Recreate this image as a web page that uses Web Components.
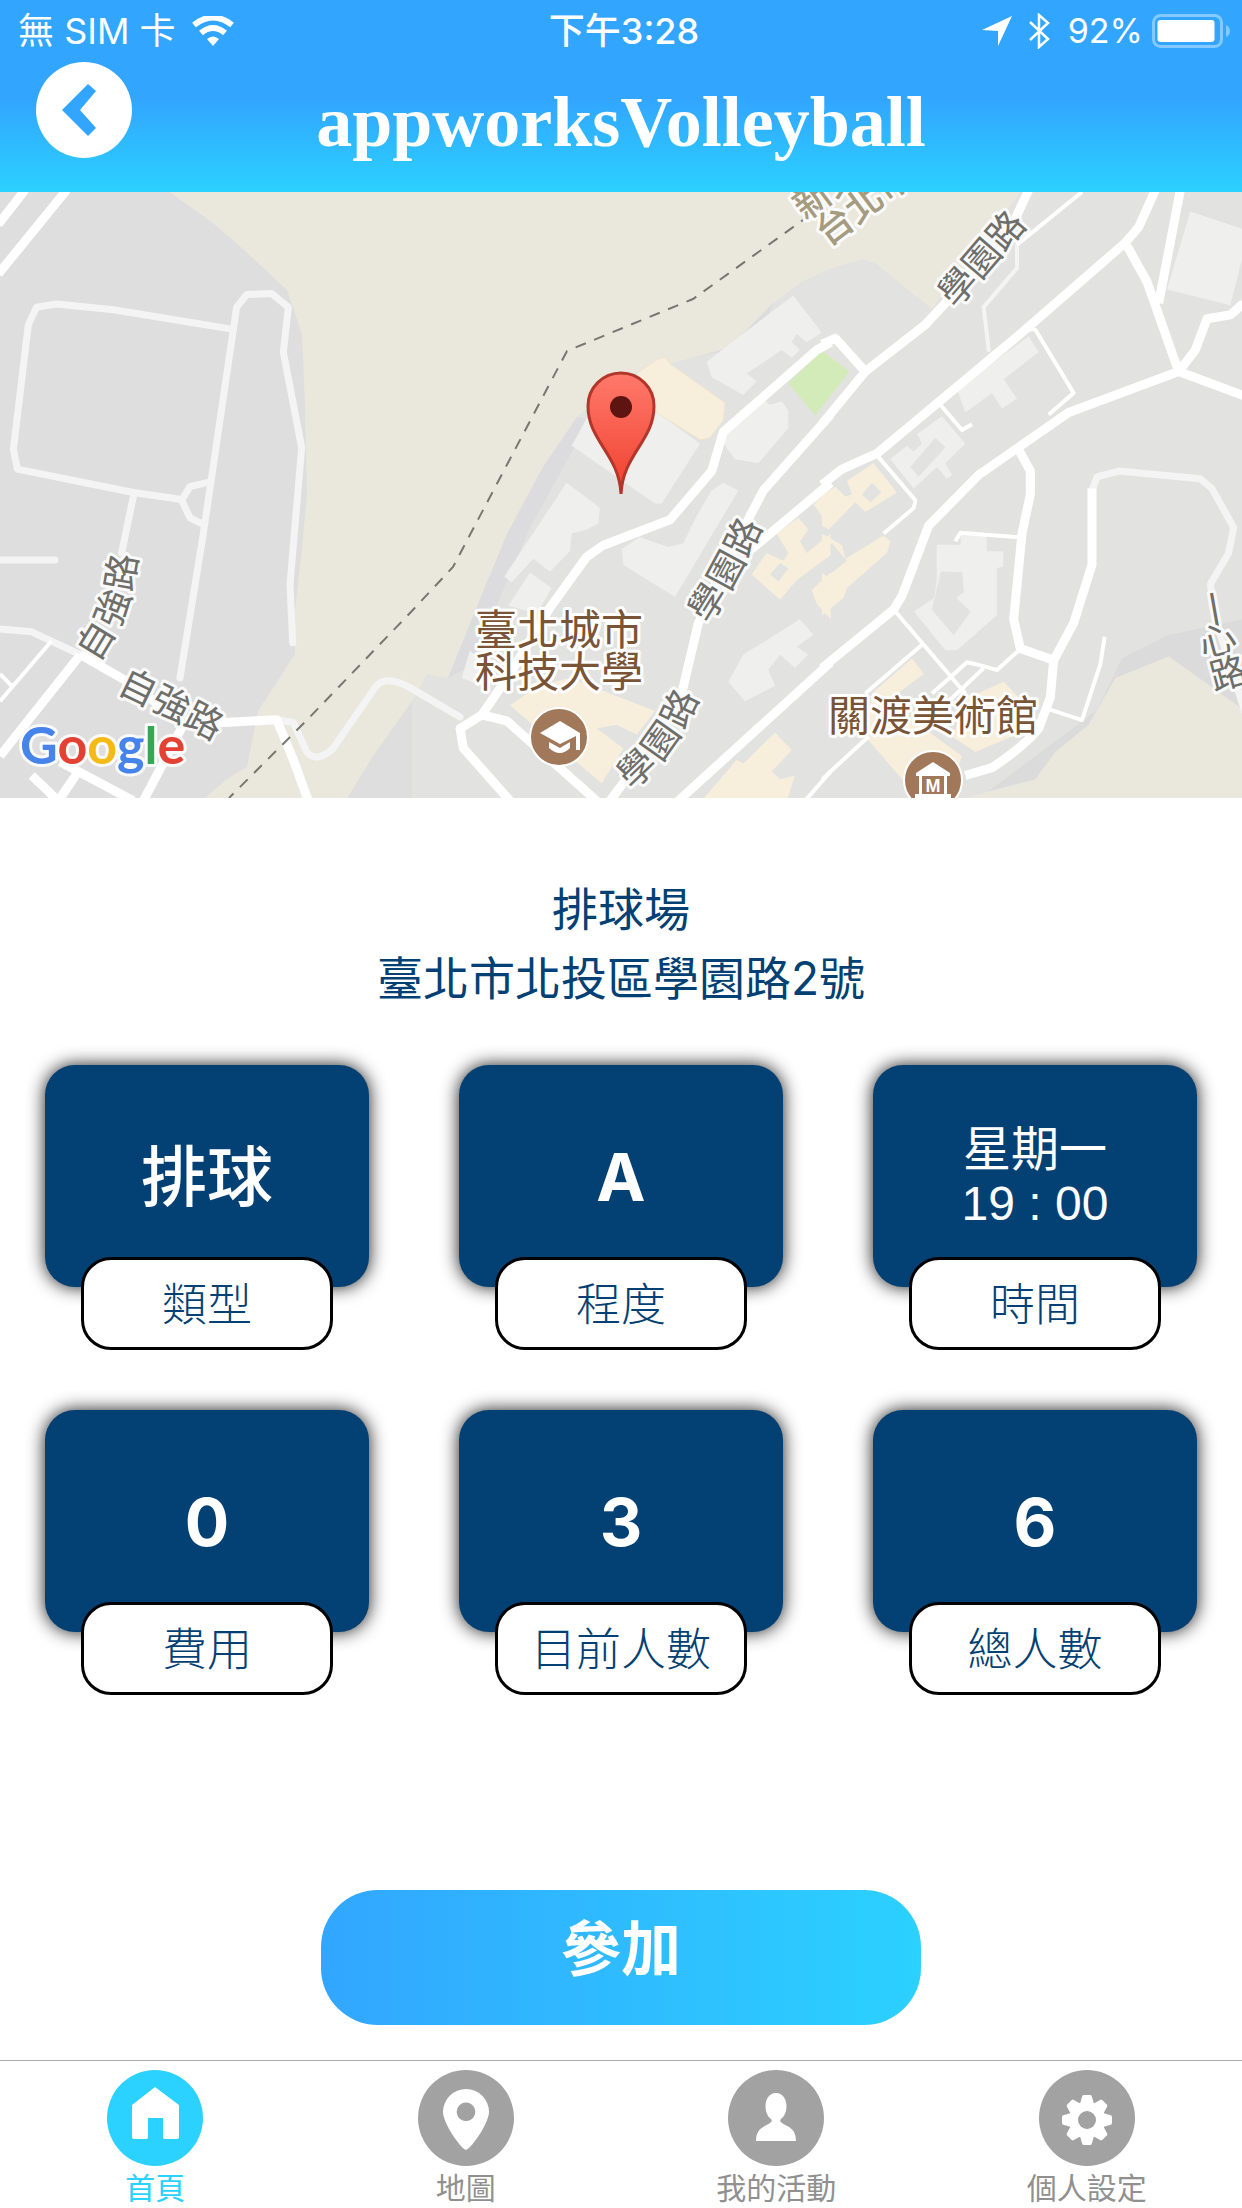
<!DOCTYPE html>
<html lang="zh-Hant">
<head>
<meta charset="utf-8">
<meta name="viewport" content="width=device-width, initial-scale=1">
<title>appworksVolleyball</title>
<style>
  :root {
    --navy: #034174;
    --sky: #32a6ff;
    --aqua: #2bd1ff;
    --muted: #a2a2a2;
    --ui: Inter, "Noto Sans CJK TC", sans-serif;
  }
  body { margin: 0; background: #fff; font-family: var(--ui); }
</style>
</head>
<body>
<game-page>
  <app-header slot="header" heading="appworksVolleyball"></app-header>
  <venue-map slot="map"></venue-map>
  <venue-info>
    <span slot="name">排球場</span>
    <span slot="address">臺北市北投區學園路2號</span>
  </venue-info>
  <stat-grid>
    <stat-card label="類型" kind="word">排球</stat-card>
    <stat-card label="程度">A</stat-card>
    <stat-card label="時間" kind="time">星期一<br>19 : 00</stat-card>
    <stat-card label="費用">0</stat-card>
    <stat-card label="目前人數">3</stat-card>
    <stat-card label="總人數">6</stat-card>
  </stat-grid>
  <join-button slot="action">參加</join-button>
  <tab-bar slot="tabs">
    <tab-item icon="home" active>首頁</tab-item>
    <tab-item icon="map">地圖</tab-item>
    <tab-item icon="user">我的活動</tab-item>
    <tab-item icon="gear">個人設定</tab-item>
  </tab-bar>
</game-page>

<script>
class Base extends HTMLElement {
  connectedCallback() {
    if (!this.shadowRoot) this.attachShadow({ mode: 'open' }).innerHTML = this.render();
  }
}

customElements.define('game-page', class extends Base {
  render() {
    return `
<style>
  :host { display: flex; flex-direction: column; min-height: 100vh; }
  main { flex: 1; display: flex; flex-direction: column; }
  .action { flex: 1; display: flex; align-items: flex-end; justify-content: center; padding: 60px 36px 35px; }
</style>
<slot name="header"></slot>
<main>
  <slot name="map"></slot>
  <slot></slot>
  <div class="action"><slot name="action"></slot></div>
</main>
<slot name="tabs"></slot>`;
  }
});

customElements.define('status-bar', class extends Base {
  render() {
    return `
<style>
  :host { box-sizing: border-box; display: grid; grid-template-columns: 1fr auto 1fr; align-items: center; height: 60px; padding: 2px 12px 0 18px; font-size: 36px; line-height: 58px; color: #fff; }
  div { display: flex; align-items: center; gap: 16px; }
  .time { font-weight: 500; }
  .right { justify-content: flex-end; }
  .power { gap: 9px; font-size: 34px; }
  svg { display: block; }
</style>
<div>
  <span>無 SIM 卡</span>
  <svg width="42" height="30" viewBox="0 0 42 30" fill="#fff"><path d="M21 30l-6-7q6-5 12 0z"/><path d="M9 17q12-10 24 0" fill="none" stroke="#fff" stroke-width="6"/><path d="M2 9q19-15 38 0" fill="none" stroke="#fff" stroke-width="6"/></svg>
</div>
<span class="time">下午3:28</span>
<div class="right">
  <svg width="30" height="30" viewBox="0 0 30 30"><path d="M30 0L16 30V15L0 14z" fill="#fff"/></svg>
  <svg width="24" height="36" viewBox="0 0 24 36"><path d="M2 9l18 17-9 8V2l9 8L2 27" fill="none" stroke="#fff" stroke-width="2.5"/></svg>
  <div class="power"><span>92%</span>
  <svg width="78" height="34" viewBox="0 0 78 34"><rect x="1.5" y="1.5" width="68" height="31" rx="7" fill="none" stroke="#fff" stroke-opacity=".4" stroke-width="3"/><rect x="5.500" y="6" width="57" height="22" rx="3" fill="#fff"/><path d="M74 11q4 2 4 6t-4 6z" fill="#fff" opacity=".4"/></svg></div>
</div>`;
  }
});

customElements.define('app-header', class extends Base {
  render() {
    return `
<style>
  :host { display: block; background: linear-gradient(var(--sky) 52%, var(--aqua)); }
  .bar { display: grid; grid-template-columns: 1fr auto 1fr; align-items: start; padding: 2px 36px 10px; }
  h1 { margin: 0; color: #fff; font: bold 72px/120px "Liberation Serif", serif; }
  button { width: 96px; height: 96px; padding: 0; border: 0; border-radius: 50%; background: #fff; cursor: pointer; }
  svg { display: block; }
</style>
<status-bar></status-bar>
<div class="bar">
  <button type="button" aria-label="返回"><svg width="96" height="96" viewBox="0 0 96 96"><path d="M52 22l8 7-16 19 16 18-8 8-26-26z" fill="#32a6ff"/></svg></button>
  <h1>${this.getAttribute('heading')}</h1>
</div>`;
  }
});

customElements.define('venue-map', class extends Base {
  render() {
    return `
<style>
  :host { display: block; aspect-ratio: 1242 / 606; overflow: hidden; }
  svg { display: block; width: 100%; height: 100%; }
  .roads path { fill: none; stroke-linejoin: round; vector-effect: non-scaling-stroke; }
  .w { stroke: #fff; stroke-width: 9px; }
  .l { stroke: #f4f4f4; stroke-width: 7px; stroke-linecap: round; }
  .t { stroke: #fff; stroke-width: 4px; }
  .b { fill: #efefee; }
  .y { fill: #f7eedc; }
  text { font-family: "Noto Sans CJK TC", sans-serif; paint-order: stroke; stroke: #fafafa; stroke-width: 6px; stroke-linejoin: round; }
  .road { font-size: 37px; fill: #6e6e6b; }
  .poi { font-size: 42px; fill: #7a5436; text-anchor: middle; stroke: #fff; }
  .city { font-size: 37px; font-weight: 500; fill: #a59b7e; }
  .logo { font: bold 52px Lato, sans-serif; }
  .mark { font: bold 18px "Liberation Sans", sans-serif; fill: #fff; stroke: none; text-anchor: middle; }
</style>
<svg viewBox="0 192 1242 606" preserveAspectRatio="xMidYMid slice">
  <defs>
    <linearGradient id="pin" x2="0" y2="1"><stop stop-color="#ff796b"/><stop offset="1" stop-color="#f0402e"/></linearGradient>
    <path id="r1" d="M85 656Q110 619 116 595T125 540"/>
    <path id="r2" d="M122 679Q171 702 233 735"/>
    <path id="r3" d="M697 617Q728 571 756 506"/>
    <path id="r4" d="M622 780Q668 744 690 681"/>
    <path id="r5" d="M945 300L1030 201"/>
    <path id="c1" d="M797 210L906 128"/>
    <path id="c2" d="M819 236L926 156"/>
  </defs>
  <rect y="192" width="1242" height="606" fill="#e2e3e0"/>
  <path d="M0 192H412V798H0z" fill="#dedede"/>
  <path d="M167 190L213 223 243 249 287 290 302 334 305 405 307 494 302 549 295 611V654L277 682 258 711 247 767 227 779 203 800H346L373 756 412 701 427 674 448 678 480 599 507 534 543 467 577 417 623 377 657 366 677 362 727 350 773 303 803 281 830 269 862 259 875 263 932 309 1022 190z" fill="#eae8dc"/>
  <path d="M448 678L480 599 507 534 543 467 577 417 590 419 530 528 470 667zM677 362L727 350 773 303 760 339z" fill="#dcdcdf"/>

  <g transform="translate(0 190) scale(.33333 .3903)" class="roads">
    <path class="l" d="M700 357L340 307 170 292 110 300 85 345 40 665 52 715 400 775 545 793"/>
    <path class="l" d="M540 1250L610 880 710 300 740 268 815 265 865 300 850 415 905 660 870 1010 878 1160"/>
    <path class="l" d="M630 748L570 760 545 795 570 840 610 857M400 785L365 930M0 948H165M0 1125L95 1132 240 1190"/>
    <path class="l" d="M830 1357L880 1364 920 1440Q950 1470 1000 1430L1125 1275Q1155 1240 1230 1275L1380 1350"/>
    <path class="w" d="M240 1190L400 1268 550 1370 830 1357 880 1460 925 1565M-5 88L75 0M-5 215L200 0M0 1450L240 1192M95 1500L175 1565M175 1565L235 1490M180 1465L400 1565M430 1565L550 1370"/>
    <path class="t" d="M0 1310L155 1155M0 1240L40 1275"/>
  </g>

  <g transform="translate(410 190) scale(.33333 .3903)">
    <path class="b" d="M1150 270L1235 365 1190 390 1160 368 1145 390 1170 410 1145 430 1115 410 1010 470 1040 490 1000 525 905 480 890 440z"/>
    <path class="b" d="M1045 530L1080 550 1115 542 1135 565 1135 610 1045 700 975 690 945 655V610zM530 585L735 565 870 650 755 803 735 803 485 655zM470 750L570 815 565 855 530 870 485 880 480 925 420 978 370 945 305 1005 283 990zM360 980L425 1020 380 1085 295 1065zM940 750L985 770 795 1043 640 960 635 920 690 890 775 915 820 905 860 835 905 770z"/>
    <path class="b" d="M1170 1100L1210 1140 1160 1170 1195 1190 1155 1225 1110 1190 1075 1230 1095 1270 1005 1310 955 1260 1000 1190zM180 1180L260 1240 200 1265 155 1250z"/>
    <path class="y" stroke="#f0e2c6" stroke-width="2" d="M765 428L780 445 945 545 940 590 900 635 870 640 730 565 680 470 740 435z"/>
    <path class="y" d="M1100 880L1165 840 1195 870 1170 900 1190 930 1262 880V935L1160 1000 1110 1050 1025 985 1070 930 1120 950 1135 930zM1262 765L1210 805 1240 840 1262 830zM1205 1025L1262 980V1100L1220 1060z"/>
    <path class="y" d="M385 1270L480 1250 735 1335 680 1395 620 1370 560 1380 640 1430 575 1520 300 1320zM1095 1390L1145 1435 1085 1490 1110 1510 1155 1500 1130 1565H875L980 1460 1000 1470z"/>
    <path d="M1080 985L1110 955 1135 970 1105 1003z" fill="#e2e3e0"/>
  </g>

  <g transform="translate(822 190) scale(.33333 .3903)">
    <path d="M-101 495L0 412 82 465-20 578z" fill="#d3ebb8"/>
    <path d="M500 1540L640 1510 780 1410 900 1200 1040 1140 1262 1100V1330L1040 1195z" fill="#dbdbdb"/>
    <path d="M1040 1195L1262 1330V1565H400L640 1510 700 1440 800 1370 880 1250z" fill="#eae8dc"/>
    <path class="b" d="M1105 55L1262 100V170L1225 295 1035 255zM620 375L650 415 545 485 585 535 540 560 510 520 430 570 405 510zM360 580L430 650 370 700 390 730 375 740 345 710 275 765 205 690 255 655 275 670 300 650 285 625z"/>
    <path d="M340 635L370 660 290 735 265 710z" fill="#e2e3e0"/>
    <path class="b" fill-rule="evenodd" stroke="#e3e3e2" stroke-width="2" d="M343 908H415V880H495V925H545V965L525 970V1090L405 1180H370L275 1080 335 1045 343 1000zM358 978L420 980 425 1030 402 1045 445 1080 395 1140 330 1075z"/>
    <path class="y" fill-rule="evenodd" d="M155 700L225 775 130 825 100 800 20 870 0 860V780L40 760 70 785 90 780 75 745zM0 880L60 910 70 945 185 885 205 900 195 930 75 1020 65 1045 0 1090zM120 780L150 750 178 775 145 800zM30 905L75 950 15 990 0 980V925z"/>
    <path class="y" d="M270 1200L305 1240 195 1310 420 1450 400 1500 240 1510 130 1400 150 1290zM545 1260L590 1300 570 1400 460 1440 390 1400 440 1300z"/>
  </g>

  <g transform="translate(410 190) scale(.33333 .3903)" class="roads">
    <path class="w" d="M1262 390L1220 410 940 620 905 720 780 845 580 910 530 940 420 1070 300 1240 215 1345 150 1380 160 1430 300 1565M215 1345L290 1360 560 1565M1262 575L1060 770 1020 835 930 1000 865 1110 815 1290 700 1450 600 1565M1262 750L1060 895 1010 930M1262 1210L805 1565"/>
    <path class="t" d="M1262 1490L1185 1565"/>
  </g>
  <g transform="translate(822 190) scale(.33333 .3903)" class="roads">
    <path class="l" d="M585 140V200L485 300 500 410" style="stroke-width:4px"/>
    <path class="l" d="M810 770L825 735 890 720 1135 740 1170 765 1235 865 1220 930 1165 1010 1180 1100 1270 1340"/>
    <path class="w" d="M0 600L130 465 310 345 370 290 560 110 620 0M130 465L40 380 0 395M0 755L60 715 165 675 600 365 910 135 950 95 1000 0M910 135L975 235 1070 465M1075 0L1010 290M1265 527L1070 465 1120 410 1155 330 1225 320 1265 290M1070 465L740 570 470 730 320 860 240 1040 215 1075 0 1225"/>
    <path class="w" d="M590 665L625 720V780L600 880 575 1100 595 1175 695 1205M810 765V960L755 1110 695 1205 685 1300 650 1380Q600 1430 510 1480L430 1500"/>
    <path class="t" d="M600 355L640 358 755 520 680 575M350 545L420 615 450 600M165 680L280 795 275 815 185 880M780 5L585 140M400 900L415 878 595 890M220 1080L430 1290M0 1510L140 1400M130 1290L300 1165M330 1290L435 1210 485 1220 525 1230 590 1180M380 1310L485 1225M680 1330L780 1358 835 1215 848 1145"/>
  </g>
  <path d="M810 215L693 299 567 351 453 567 410 613 307 720 229 798" fill="none" stroke="#777770" stroke-width="2" stroke-dasharray="11 9"/>

  <text class="city"><textPath href="#c1"><tspan dy=".38em">新北市</tspan></textPath></text>
  <text class="city"><textPath href="#c2"><tspan dy=".38em">台北市</tspan></textPath></text>
  <text class="road"><textPath href="#r1"><tspan dy=".38em">自強路</tspan></textPath></text>
  <text class="road"><textPath href="#r2"><tspan dy=".38em">自強路</tspan></textPath></text>
  <text class="road"><textPath href="#r3"><tspan dy=".38em">學園路</tspan></textPath></text>
  <text class="road"><textPath href="#r4"><tspan dy=".38em">學園路</tspan></textPath></text>
  <text class="road"><textPath href="#r5"><tspan dy=".38em">學園路</tspan></textPath></text>
  <text class="road" x="1197 1203 1214" y="594 658 691" rotate="80 -15 -15">一心路</text>
  <text class="poi" x="559" y="645">臺北城市</text>
  <text class="poi" x="559" y="687">科技大學</text>
  <text class="poi" x="933" y="731">關渡美術館</text>

  <g stroke="#fff" stroke-width="2" fill="#a1795a"><circle cx="559" cy="737" r="29"/><circle cx="933" cy="780" r="29"/></g>
  <path d="M540 733l20-12 20 12v17h-4v-14l-16 8zM549 742l11 6 10-6v6q-10 10-21 0z" fill="#fff"/>
  <path d="M916 773l17-11 17 11v3h-3v18h4v4h-36v-4h4v-18h-3z" fill="#fff"/><path d="M922 776h22v18h-22z" fill="#a1795a"/>
  <text class="mark" x="933" y="792">M</text>

  <path d="M621 494C619 454 588 441 588 406a33 33 0 0 1 66 0C654 441 623 454 621 494z" fill="url(#pin)" stroke="#b3362b" stroke-width="3"/>
  <circle cx="621" cy="407" r="11" fill="#5e1410"/>

  <text class="logo" x="20" y="764"><tspan fill="#4683ea">G</tspan><tspan fill="#e34133">o</tspan><tspan fill="#f5ba15">o</tspan><tspan fill="#4683ea">g</tspan><tspan fill="#34a853">l</tspan><tspan fill="#e34133">e</tspan></text>
</svg>`;
  }
});

customElements.define('venue-info', class extends Base {
  render() {
    return `
<style>
  :host { display: flex; flex-direction: column; align-items: center; padding: 77px 36px 52px; color: var(--navy); font-size: 46px; line-height: 69px; }
</style>
<slot name="name"></slot>
<slot name="address"></slot>`;
  }
});

customElements.define('stat-grid', class extends Base {
  render() {
    return `
<style>
  :host { display: grid; grid-template-columns: repeat(3, 1fr); gap: 60px 90px; padding: 0 45px; }
</style>
<slot></slot>`;
  }
});

customElements.define('stat-card', class extends Base {
  render() {
    return `
<style>
  :host { display: flex; flex-direction: column; align-items: center; color: #fff; font-size: 66px; font-weight: 700; line-height: 78px; text-align: center; }
  :host([kind="word"]) { font-weight: 500; }
  :host([kind="time"]) { font: 400 48px/54px "Liberation Sans", "Noto Sans CJK TC", sans-serif; }
  .value { box-sizing: border-box; display: flex; align-items: center; justify-content: center; align-self: stretch; height: 222px; padding-top: 2px; border-radius: 30px; background: var(--navy); box-shadow: 0 0 18px rgba(0, 0, 0, .9); }
  .label { box-sizing: border-box; width: 252px; margin-top: -30px; padding-top: 2px; border: 3px solid #000; border-radius: 30px; background: #fff; color: var(--navy); font: 300 45px/85px var(--ui); z-index: 1; }
</style>
<div class="value"><div><slot></slot></div></div>
<div class="label">${this.getAttribute('label')}</div>`;
  }
});

customElements.define('join-button', class extends Base {
  render() {
    return `
<style>
  :host { display: block; }
  button { width: 600px; max-width: 100%; height: 135px; padding: 0 0 18px; border: 0; border-radius: 57px; background: linear-gradient(90deg, var(--sky), var(--aqua)); color: #fff; font: 600 60px/72px var(--ui); cursor: pointer; }
</style>
<button type="button"><slot></slot></button>`;
  }
});

customElements.define('tab-bar', class extends Base {
  render() {
    return `
<style>
  :host { display: block; border-top: 1px solid #ababab; background: #fff; }
  nav { display: grid; grid-template-columns: repeat(4, 1fr); padding: 9px 0 2px; }
</style>
<nav><slot></slot></nav>`;
  }
});

const ICONS = {
  home: '<path d="M48 17L72 35V67q0 2-2 2H58q-2 0-2-2V48H41V67q0 2-2 2H27q-2 0-2-2V35z"/>',
  map: '<path fill-rule="evenodd" d="M48 80C41 77 25 52 25 42a23 23 0 0 1 46 0C71 52 55 77 48 80zM48 32.500a9.300 9.300 0 1 0 .01 0z"/>',
  user: '<path d="M28 71C28 58 36 57 42 53Q45 51 43 49C35 44 35 23 48 23S61 44 53 49Q51 51 54 53C60 57 68 58 68 71z"/>',
  gear: '<g>' + [0, 45, 90, 135].map(a => `<path d="M43 27q0-2 2-2h6q2 0 2 2l2 7v32l-2 7q0 2-2 2h-6q-2 0-2-2l-2-7V34z" transform="rotate(${a} 48 50)"/>`).join('') + '<circle cx="48" cy="50" r="18"/><circle cx="48" cy="50" r="9" fill="#a2a2a2"/></g>'
};

customElements.define('tab-item', class extends Base {
  render() {
    return `
<style>
  :host { display: flex; justify-content: center; --tint: var(--muted); color: #909090; }
  :host([active]) { --tint: var(--aqua); color: var(--aqua); }
  a { display: flex; flex-direction: column; align-items: center; gap: 4px; color: inherit; text-decoration: none; font: 400 30px/36px var(--ui); }
  svg { display: block; border-radius: 50%; background: var(--tint); }
</style>
<a href="#${this.getAttribute('icon')}"><svg width="96" height="96" viewBox="0 0 96 96" fill="#fff">${ICONS[this.getAttribute('icon')]}</svg><slot></slot></a>`;
  }
});
</script>
</body>
</html>
